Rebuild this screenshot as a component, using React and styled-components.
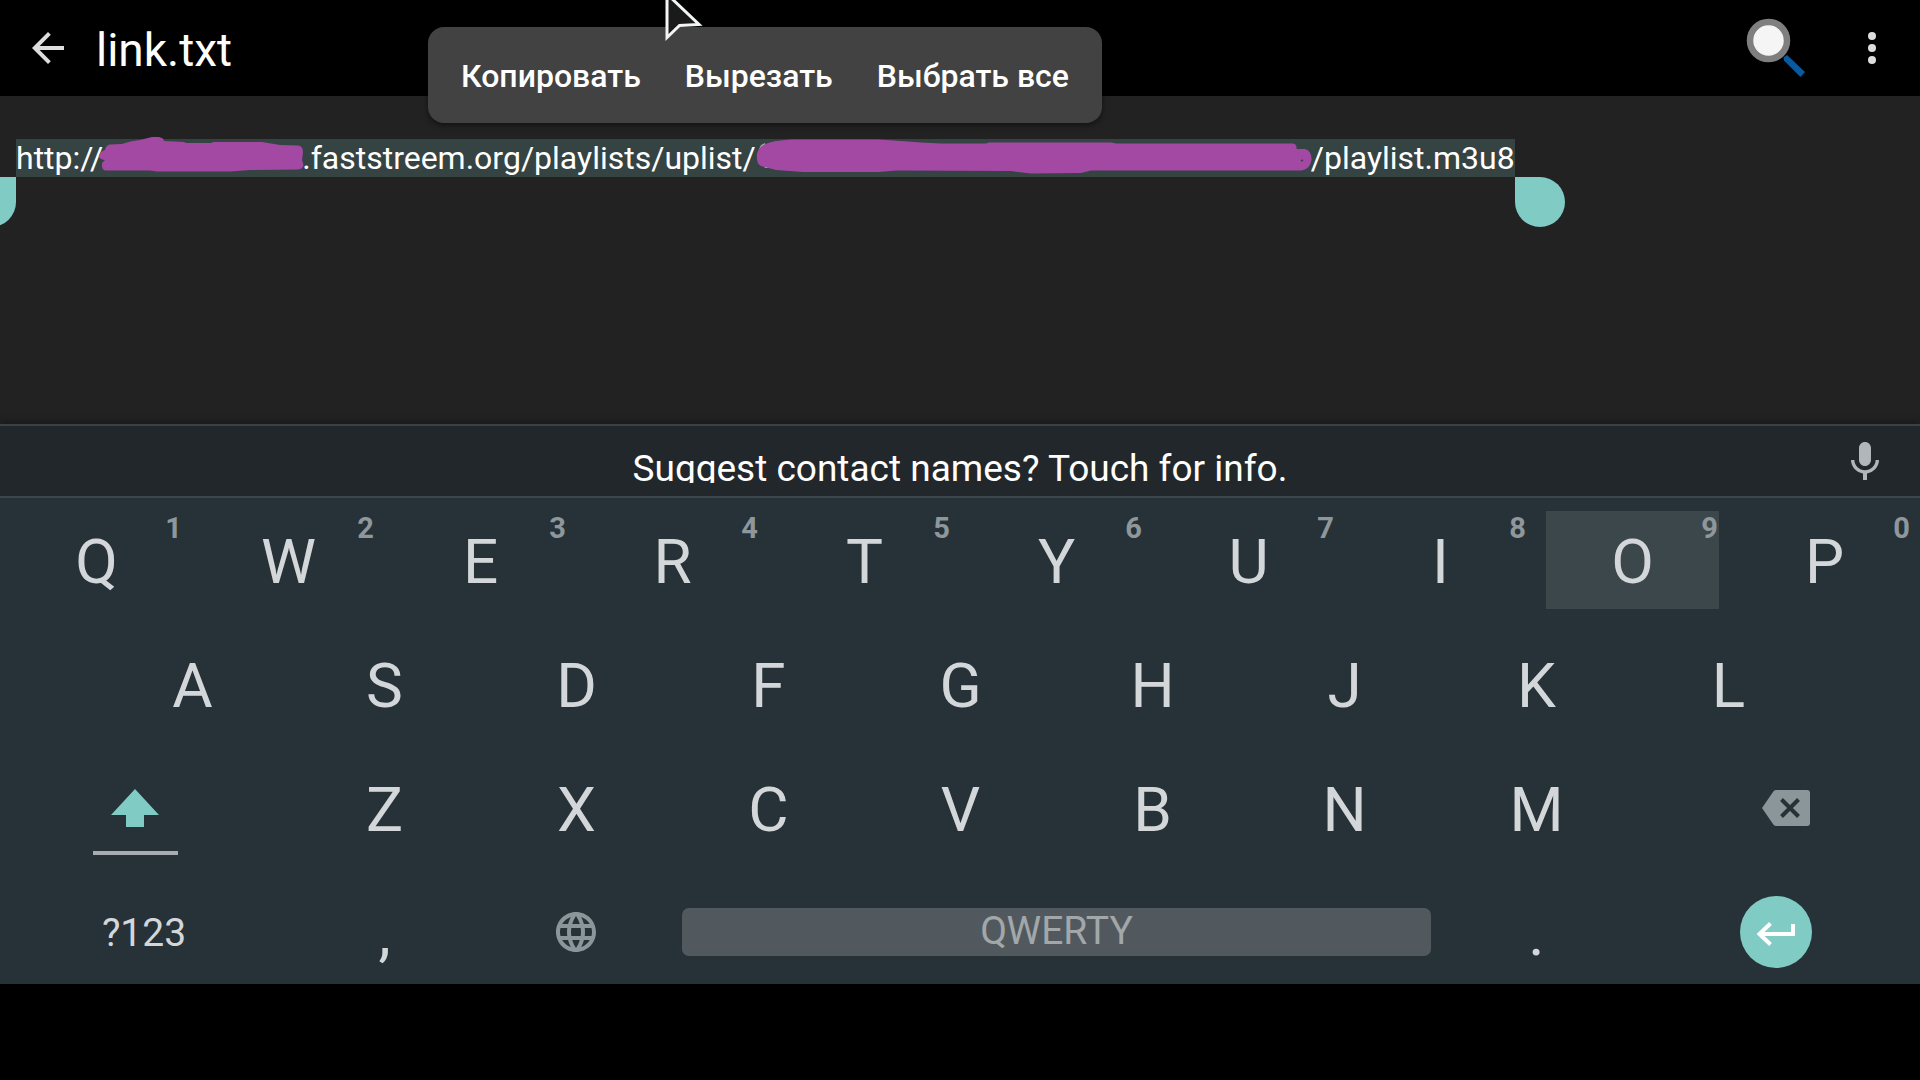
import React from "react";
import styled, { createGlobalStyle } from "styled-components";

const GlobalStyle = createGlobalStyle`
  * { box-sizing: border-box; }
  html, body { margin: 0; background: #000; overflow: hidden; }
  body, button { font-family: Roboto, "Noto Sans", sans-serif; }
  button {
    margin: 0;
    padding: 0;
    border: 0;
    background: none;
    color: inherit;
    cursor: pointer;
  }
  svg { display: block; flex: none; }
`;

const Screen = styled.div`
  position: relative;
  display: flex;
  flex-direction: column;
  min-height: 100vh;
  overflow: hidden;
  background: #000;
  color: #fff;
`;

const AppBar = styled.header`
  display: flex;
  align-items: center;
  height: 96px;
  background: #000;
`;

const BarButton = styled.button`
  display: grid;
  place-items: center;
  width: 96px;
  height: 96px;
`;

const Title = styled.h1`
  flex: 1;
  margin: 0;
  padding-top: 4px;
  font-size: 46px;
  font-weight: 400;
  line-height: 54px;
`;

const Editor = styled.main`
  flex: 1;
  padding: 43px 16px 0;
  background: #222;
`;

const Line = styled.p`
  margin: 0;
  font-size: 32px;
  line-height: 38px;
  white-space: nowrap;
`;

const Selection = styled.mark`
  position: relative;
  display: inline-flex;
  height: 38px;
  background: #364343;
  color: #fff;
`;

const Scribble = styled.svg`
  position: relative;
  overflow: visible;
`;

const Handle = styled.span`
  position: absolute;
  top: 100%;
  width: 50px;
  height: 50px;
  background: #80cbc4;
  ${(p) =>
    p.$side === "start"
      ? "right: 100%; border-radius: 50% 0 50% 50%;"
      : "left: 100%; border-radius: 0 50% 50% 50%;"}
`;

const ContextMenu = styled.div`
  position: absolute;
  top: 27px;
  left: 428px;
  display: flex;
  height: 96px;
  padding: 0 11px;
  border-radius: 16px;
  background: #424242;
  box-shadow: 0 2px 6px rgba(0, 0, 0, 0.5);
`;

const MenuItem = styled.button`
  padding: 2px 22px 0;
  font-size: 32px;
  font-weight: 500;
  line-height: 38px;
  white-space: nowrap;
`;

const Pointer = styled.svg`
  position: absolute;
  top: 0;
  left: 660px;
  pointer-events: none;
`;

const Keyboard = styled.section`
  position: relative;
  background: #263238;
  color: #d4d7d9;
  box-shadow: 0 -2px 8px rgba(0, 0, 0, 0.3);
`;

const Suggestions = styled.div`
  display: grid;
  grid-template-columns: 110px 1fr 110px;
  align-items: center;
  height: 74px;
  border-top: 2px solid #3a4146;
  border-bottom: 2px solid #3b474d;
  background: #22272b;
`;

const Suggestion = styled.button`
  grid-column: 2;
  align-self: start;
  height: 57px;
  padding-top: 21px;
  overflow: hidden;
  color: #fff;
  font-size: 37px;
  line-height: 44px;
`;

const MicButton = styled.button`
  display: grid;
  place-items: center;
  height: 70px;
  padding-top: 2px;
`;

const Keys = styled.div`
  display: flex;
  flex-direction: column;
  gap: 26px;
  padding: 13px 0 3px;
`;

const KeyRow = styled.div`
  display: flex;
  height: 98px;
`;

const KeySpacer = styled.span`
  flex: 0 0 5%;
`;

const KeyCap = styled.button`
  position: relative;
  flex: 0 0 calc(10% - 19px);
  margin: 0 9px 0 10px;
  padding-top: 4px;
  background: ${(p) => (p.$pressed ? "#3c474c" : "none")};
  font-size: 62px;
  line-height: 94px;
`;

const Hint = styled.sup`
  position: absolute;
  top: 0;
  right: 1px;
  color: #8f979b;
  font-size: 29px;
  font-weight: 700;
  line-height: 34px;
`;

const WideKey = styled.button`
  display: flex;
  flex-direction: column;
  align-items: center;
  justify-content: center;
  flex: 0 0 15%;
  padding: ${(p) => p.$pad || "0"};
  font-size: 39px;
`;

const ShiftKey = styled(WideKey)`
  gap: 24px;
  padding-top: 27px;

  &::after {
    content: "";
    width: 85px;
    height: 4px;
    background: #a6acb0;
  }
`;

const GlobeKey = styled.button`
  display: grid;
  place-items: center;
  flex: 0 0 10%;
`;

const SpaceKey = styled.button`
  flex: 1;
  align-self: center;
  height: 48px;
  margin: 0 9px 0 10px;
  padding-bottom: 2px;
  border-radius: 7px;
  background: #51595f;
  color: #a2a7aa;
  font-size: 39px;
  line-height: 46px;
`;

const EnterDisc = styled.span`
  display: grid;
  place-items: center;
  width: 72px;
  height: 72px;
  border-radius: 50%;
  background: #80cbc4;
`;

const NavBar = styled.footer`
  height: 96px;
  background: #000;
`;

const TOP_ROW = [..."QWERTYUIOP"];
const HOME_ROW = [..."ASDFGHJKL"];
const BOTTOM_ROW = [..."ZXCVBNM"];

function Letter({ char, hint, pressed }) {
  return (
    <KeyCap type="button" $pressed={pressed}>
      {char}
      {hint && <Hint>{hint}</Hint>}
    </KeyCap>
  );
}

export default function App() {
  return (
    <Screen>
      <GlobalStyle />
      <AppBar>
        <BarButton type="button" aria-label="Back">
          <svg width="48" height="48" viewBox="0 0 24 24" fill="#ddd">
            <path d="M20 11H7.83l5.59-5.59L12 4l-8 8 8 8 1.41-1.41L7.83 13H20z" />
          </svg>
        </BarButton>
        <Title>link.txt</Title>
        <BarButton type="button" aria-label="Search">
          <svg width="64" height="64" viewBox="0 0 64 64">
            <path d="M39.500 41.500L43 39L61 56L56.500 61L40 44.500z" fill="#0a5aa0" />
            <circle cx="24.500" cy="24.500" r="18.500" fill="#f5f5f5" stroke="#7f7f7f" strokeWidth="6.500" />
          </svg>
        </BarButton>
        <BarButton type="button" aria-label="More">
          <svg width="48" height="48" viewBox="0 0 24 24" fill="#ddd">
            <circle cx="12" cy="6" r="2" />
            <circle cx="12" cy="12" r="2" />
            <circle cx="12" cy="18" r="2" />
          </svg>
        </BarButton>
      </AppBar>

      <Editor>
        <Line>
          <Selection>
            <Handle $side="start" />
            <span>http://</span>
            <Scribble width="199" height="38" viewBox="103 139 199 38" fill="#a349a4">
              <path d="M99 155Q101 151 105 150Q106 145 110 144.500L122 144Q130 141 140 140L152 137H159Q164 138 164 141L184 142L186 143H212L213 142H262L280 145L298 145.500Q303 146 303 152L302 160L303.500 165Q303 169 298 169.500L250 170L230 171.500H157L150 170.500H105Q102 169 102 166V163L105 160Q98 159 99 155z" />
            </Scribble>
            <span>.faststreem.org/playlists/uplist/</span>
            <Scribble width="555" height="38" viewBox="755 139 555 38" fill="#a349a4">
              <path d="M758 149L760 145L764 143L768 168H764Q758 160 758 149z" fill="#9fa5a5" />
              <path d="M756 154Q757 149 760 147Q764 143 775 141L790 139.500H877L900 141L920 142.500L940 143.500H985L988 142.500H1110L1115 143.500H1292Q1296 144 1295.500 149H1304Q1311 151 1310.500 160Q1309 169 1301 170.500H1090L1080 173L1030 173.500L1010 171L895 170.500L878 172H802L775 170L760 166Q755 164 756 154z" />
              <path d="M1300 161L1302 160" stroke="#364343" strokeWidth="1.500" />
            </Scribble>
            <span>/playlist.m3u8</span>
            <Handle $side="end" />
          </Selection>
        </Line>
      </Editor>

      <Keyboard aria-label="Keyboard">
        <Suggestions>
          <Suggestion type="button">Suggest contact names? Touch for info.</Suggestion>
          <MicButton type="button" aria-label="Voice input">
            <svg width="48" height="48" viewBox="0 0 24 24" fill="#b0b6b9">
              <path d="M12 14c1.660 0 2.990-1.340 2.990-3L15 5c0-1.660-1.340-3-3-3S9 3.340 9 5v6c0 1.660 1.340 3 3 3zm5.300-3c0 3-2.540 5.100-5.300 5.100S6.700 14 6.700 11H5c0 3.410 2.720 6.230 6 6.720V21h2v-3.280c3.280-.480 6-3.300 6-6.720h-1.700z" />
            </svg>
          </MicButton>
        </Suggestions>
        <Keys>
          <KeyRow>
            {TOP_ROW.map((c, i) => (
              <Letter key={c} char={c} hint={String((i + 1) % 10)} pressed={c === "O"} />
            ))}
          </KeyRow>
          <KeyRow>
            <KeySpacer />
            {HOME_ROW.map((c) => (
              <Letter key={c} char={c} />
            ))}
          </KeyRow>
          <KeyRow>
            <ShiftKey type="button" aria-label="Shift" $pad="0 18px 0 0">
              <svg width="48" height="38" viewBox="0 0 48 38" fill="#80cbc4">
                <path d="M24 0L48 26H33V38H15V26H0z" />
              </svg>
            </ShiftKey>
            {BOTTOM_ROW.map((c) => (
              <Letter key={c} char={c} />
            ))}
            <WideKey type="button" aria-label="Delete" $pad="0 0 0 20px">
              <svg width="48" height="36" viewBox="0 0 48 36">
                <path d="M14 0H45Q48 0 48 3V33Q48 36 45 36H14Q12 36 11 34L0 18L11 2Q12 0 14 0z" fill="#8b969b" />
                <path d="M19.500 9.500L36.500 26.500M36.500 9.500L19.500 26.500" stroke="#263238" strokeWidth="4" />
              </svg>
            </WideKey>
          </KeyRow>
          <KeyRow>
            <WideKey type="button" $pad="2px 0 0">?123</WideKey>
            <Letter char="," />
            <GlobeKey type="button" aria-label="Language">
              <svg width="48" height="48" viewBox="0 0 24 24" fill="#8b969b">
                <path d="M11.990 2C6.470 2 2 6.480 2 12s4.470 10 9.990 10C17.520 22 22 17.520 22 12S17.520 2 11.990 2zm6.930 6h-2.950c-.320-1.250-.780-2.450-1.380-3.560 1.840.630 3.370 1.910 4.330 3.560zM12 4.040c.830 1.200 1.480 2.530 1.910 3.960h-3.820c.430-1.430 1.080-2.760 1.910-3.960zM4.260 14C4.100 13.360 4 12.690 4 12s.100-1.360.260-2h3.380c-.080.660-.140 1.320-.140 2s.060 1.340.140 2H4.260zm.820 2h2.950c.320 1.250.780 2.450 1.380 3.560-1.840-.630-3.370-1.900-4.330-3.560zm2.950-8H5.080c.960-1.660 2.490-2.930 4.330-3.560C8.810 5.550 8.350 6.750 8.030 8zM12 19.960c-.830-1.200-1.480-2.530-1.910-3.960h3.820c-.430 1.430-1.080 2.760-1.910 3.960zM14.340 14H9.660c-.090-.660-.160-1.320-.160-2s.070-1.350.160-2h4.680c.090.650.160 1.320.160 2s-.070 1.340-.160 2zm.250 5.560c.600-1.110 1.060-2.310 1.380-3.560h2.950c-.960 1.650-2.490 2.930-4.330 3.560zM16.360 14c.080-.660.140-1.320.140-2s-.060-1.340-.140-2h3.380c.160.640.260 1.310.260 2s-.100 1.360-.260 2h-3.380z" />
              </svg>
            </GlobeKey>
            <SpaceKey type="button">QWERTY</SpaceKey>
            <Letter char="." />
            <WideKey type="button" aria-label="Enter">
              <EnterDisc>
                <svg width="48" height="48" viewBox="0 0 48 48" fill="none" stroke="#fff" strokeWidth="4">
                  <path d="M41 16V26H7M18.500 15.500L7.500 26L18.500 36.500" />
                </svg>
              </EnterDisc>
            </WideKey>
          </KeyRow>
        </Keys>
      </Keyboard>
      <NavBar />

      <ContextMenu role="menu">
        <MenuItem type="button" role="menuitem">Копировать</MenuItem>
        <MenuItem type="button" role="menuitem">Вырезать</MenuItem>
        <MenuItem type="button" role="menuitem">Выбрать все</MenuItem>
      </ContextMenu>
      <Pointer width="48" height="44" viewBox="0 0 48 44">
        <path d="M7 -6V37.500L19.500 25.500L39 24.500z" fill="#1a1a1a" stroke="#f2f5f4" strokeWidth="3" />
      </Pointer>
    </Screen>
  );
}
